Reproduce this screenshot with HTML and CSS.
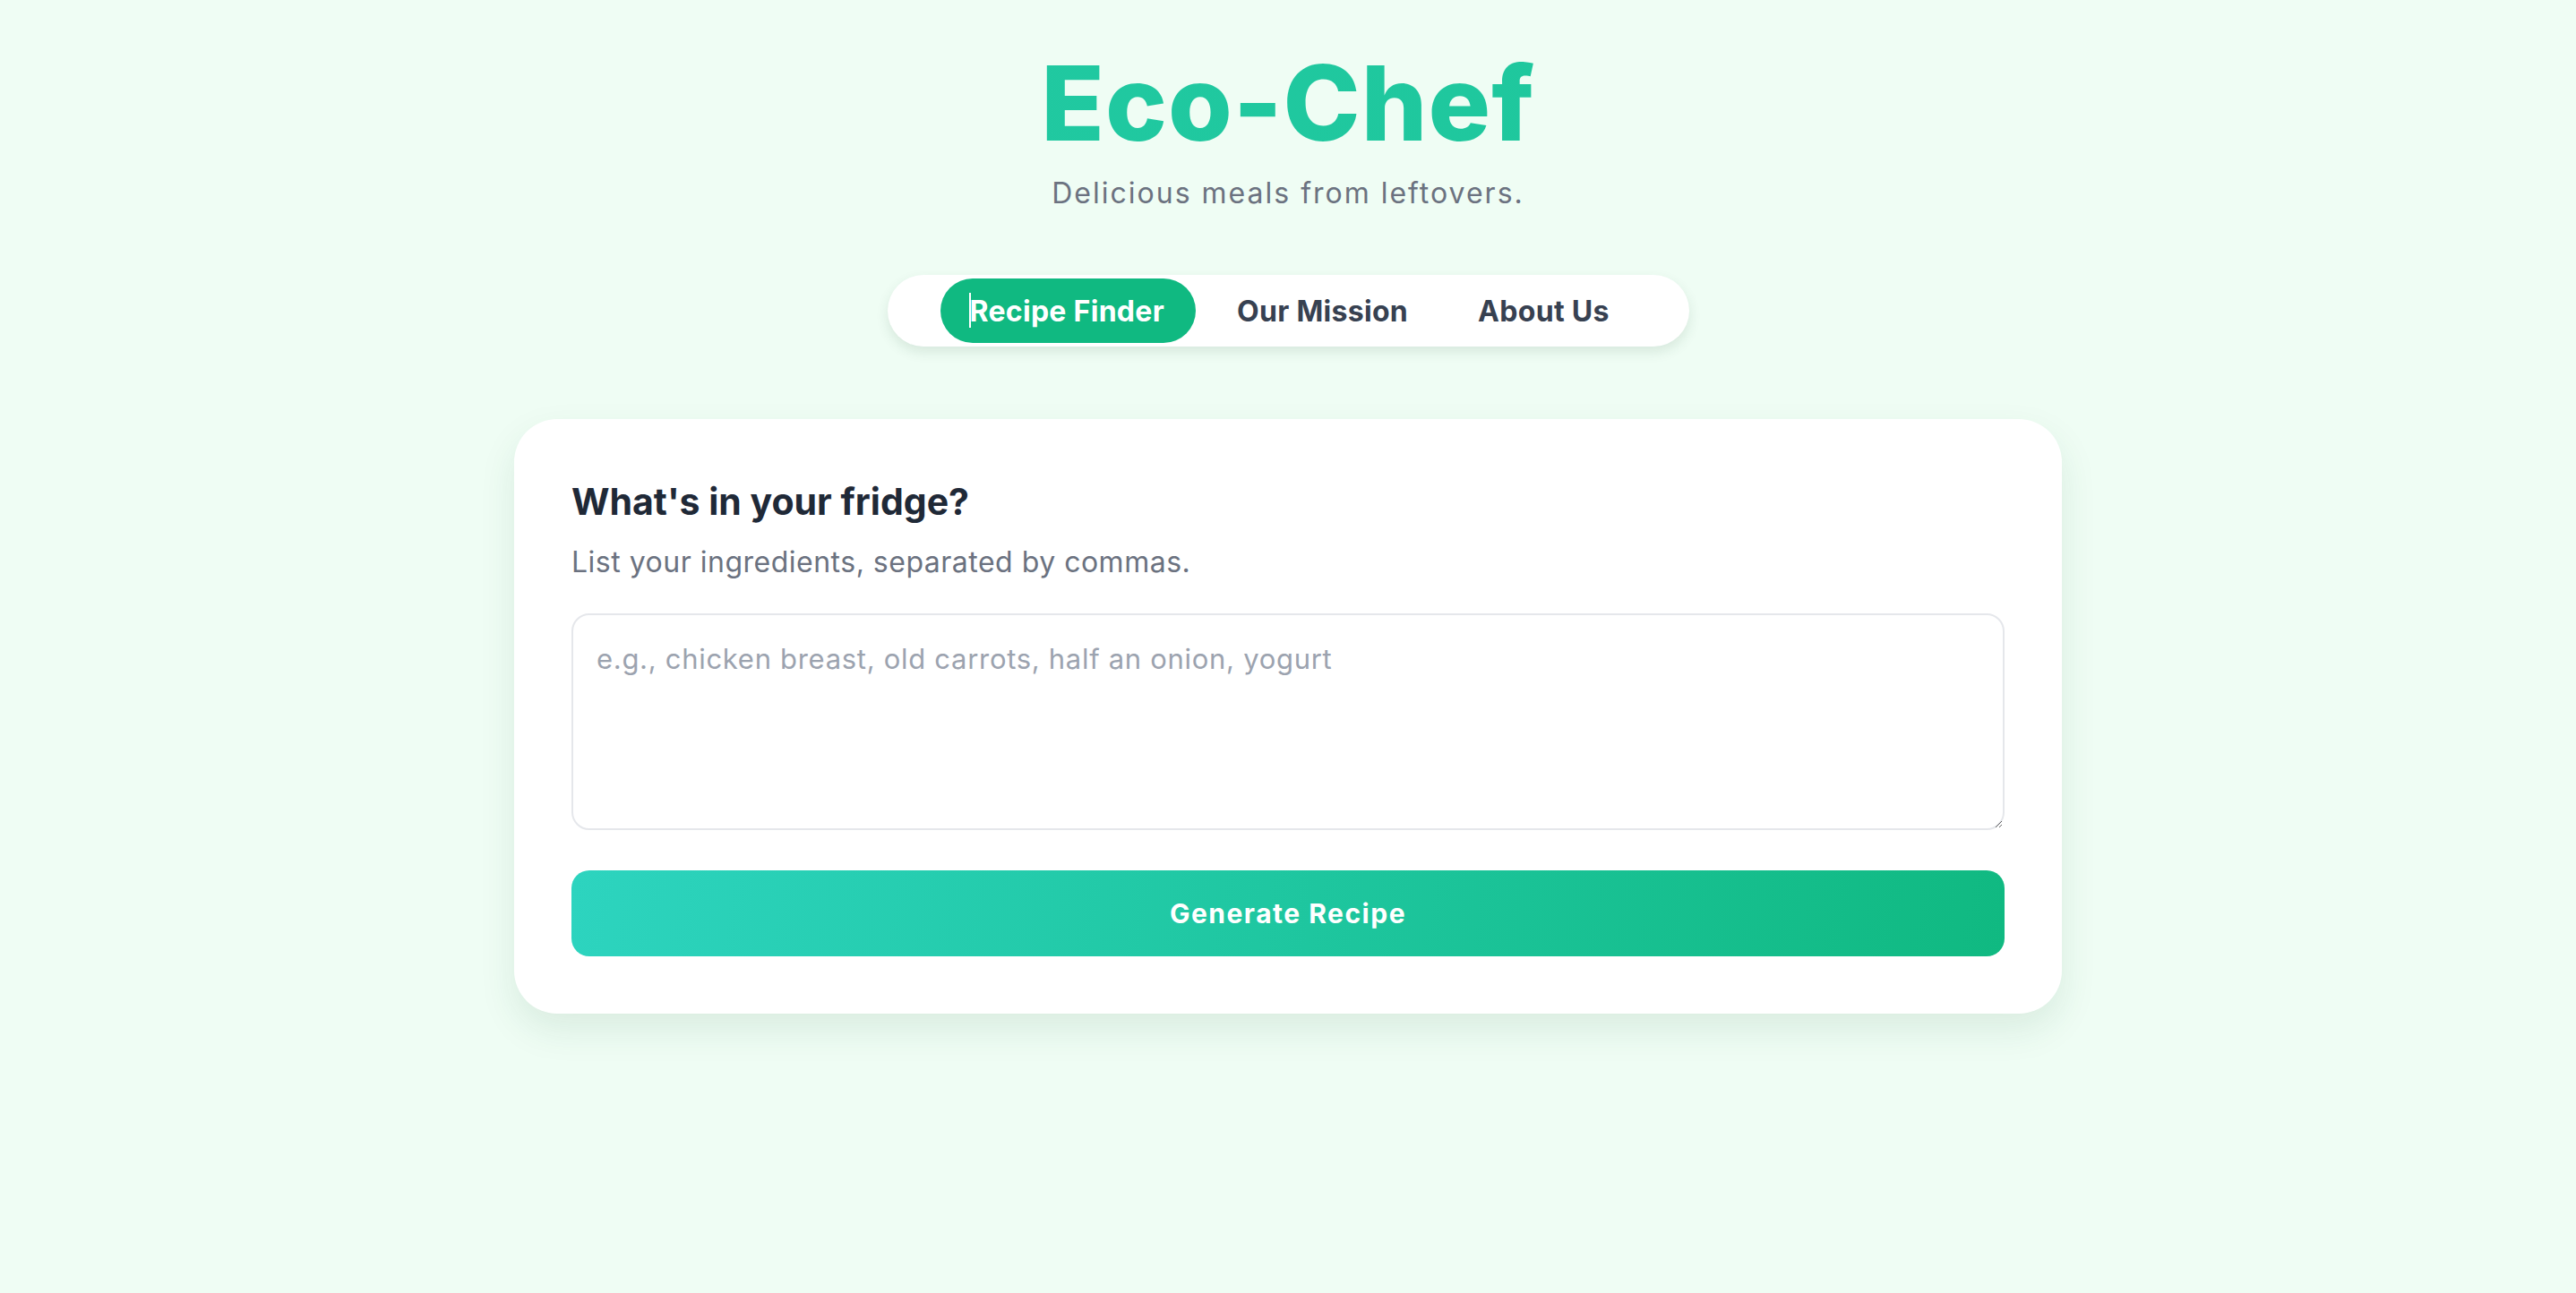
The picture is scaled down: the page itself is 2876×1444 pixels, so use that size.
FILE: index.html
```html
<!DOCTYPE html>
<html lang="en">
<head>
<meta charset="utf-8">
<title>Eco-Chef</title>
<link rel="stylesheet" href="styles.css">
</head>
<body>
<header class="site-header">
  <h1 class="brand">Eco-Chef</h1>
  <p class="tagline">Delicious meals from leftovers.</p>
</header>
<nav class="tabs">
  <button class="tab tab-active"><span class="caret"></span>Recipe Finder</button>
  <button class="tab">Our Mission</button>
  <button class="tab">About Us</button>
</nav>
<main class="card">
  <h2 class="card-title">What's in your fridge?</h2>
  <p class="card-sub">List your ingredients, separated by commas.</p>
  <textarea class="ingredients" placeholder="e.g., chicken breast, old carrots, half an onion, yogurt"></textarea>
  <button class="generate">Generate Recipe</button>
</main>
</body>
</html>
```
FILE: styles.css
```css
* { box-sizing: border-box; }
html, body { margin: 0; padding: 0; }
body {
  background: #effdf4;
  font-family: Inter, "Noto Sans", sans-serif;
  min-height: 1444px;
}
.site-header {
  padding-top: 57px;
  text-align: center;
}
.brand {
  margin: 0;
  font-size: 116px;
  line-height: 116px;
  font-weight: 800;
  letter-spacing: 1px;
  background: linear-gradient(90deg, #23cba7, #1cc597);
  -webkit-background-clip: text;
  background-clip: text;
  color: transparent;
}
.tagline {
  margin: 24px 0 0;
  font-size: 32px;
  line-height: 38px;
  letter-spacing: 2px;
  color: #6b7280;
}
.tabs {
  width: 895px;
  height: 80px;
  margin: 72px auto 0;
  background: #ffffff;
  border-radius: 40px;
  box-shadow: 0 6px 14px rgba(40, 80, 60, 0.12);
  display: flex;
  align-items: center;
  gap: 14px;
  padding: 0 40px 0 59px;
}
.tab {
  position: relative;
  border: 0;
  background: transparent;
  font-family: inherit;
  font-size: 32px;
  font-weight: 700;
  letter-spacing: 0.3px;
  color: #374151;
  height: 72px;
  padding: 0 32px;
  border-radius: 36px;
  cursor: pointer;
  white-space: nowrap;
}
.tab-active {
  background: #10b981;
  color: #ffffff;
  padding: 0 35px 0 33px;
}
.caret {
  position: absolute;
  left: 32px;
  top: 16px;
  width: 2px;
  height: 39px;
  background: #ffffff;
}
.card {
  width: 1728px;
  margin: 81px auto 0;
  background: #ffffff;
  border-radius: 48px;
  padding: 64px;
  box-shadow: 0 18px 40px rgba(30, 90, 60, 0.10);
  display: flex;
  flex-direction: column;
}
.card-title {
  margin: 0;
  font-size: 41px;
  line-height: 48px;
  font-weight: 700;
  color: #1f2937;
  padding-top: 4px;
}
.card-sub {
  margin: 24px 0 0;
  font-size: 32px;
  line-height: 40px;
  letter-spacing: 0.5px;
  color: #6b7280;
}
.ingredients {
  margin-top: 37px;
  width: 100%;
  height: 242px;
  border: 2px solid #e5e7eb;
  border-radius: 20px;
  padding: 29px 26px 20px;
  font-family: inherit;
  font-size: 31px;
  line-height: 40px;
  letter-spacing: 0.7px;
  color: #1f2937;
  resize: vertical;
  outline: none;
}
.ingredients::placeholder {
  color: #9ca3af;
}
.generate {
  margin-top: 45px;
  width: 100%;
  height: 96px;
  border: 0;
  border-radius: 20px;
  background: linear-gradient(100deg, #2dd4bf 0%, #10b981 100%);
  color: #ffffff;
  font-family: inherit;
  font-size: 30px;
  font-weight: 700;
  letter-spacing: 1.5px;
  cursor: pointer;
}
```
